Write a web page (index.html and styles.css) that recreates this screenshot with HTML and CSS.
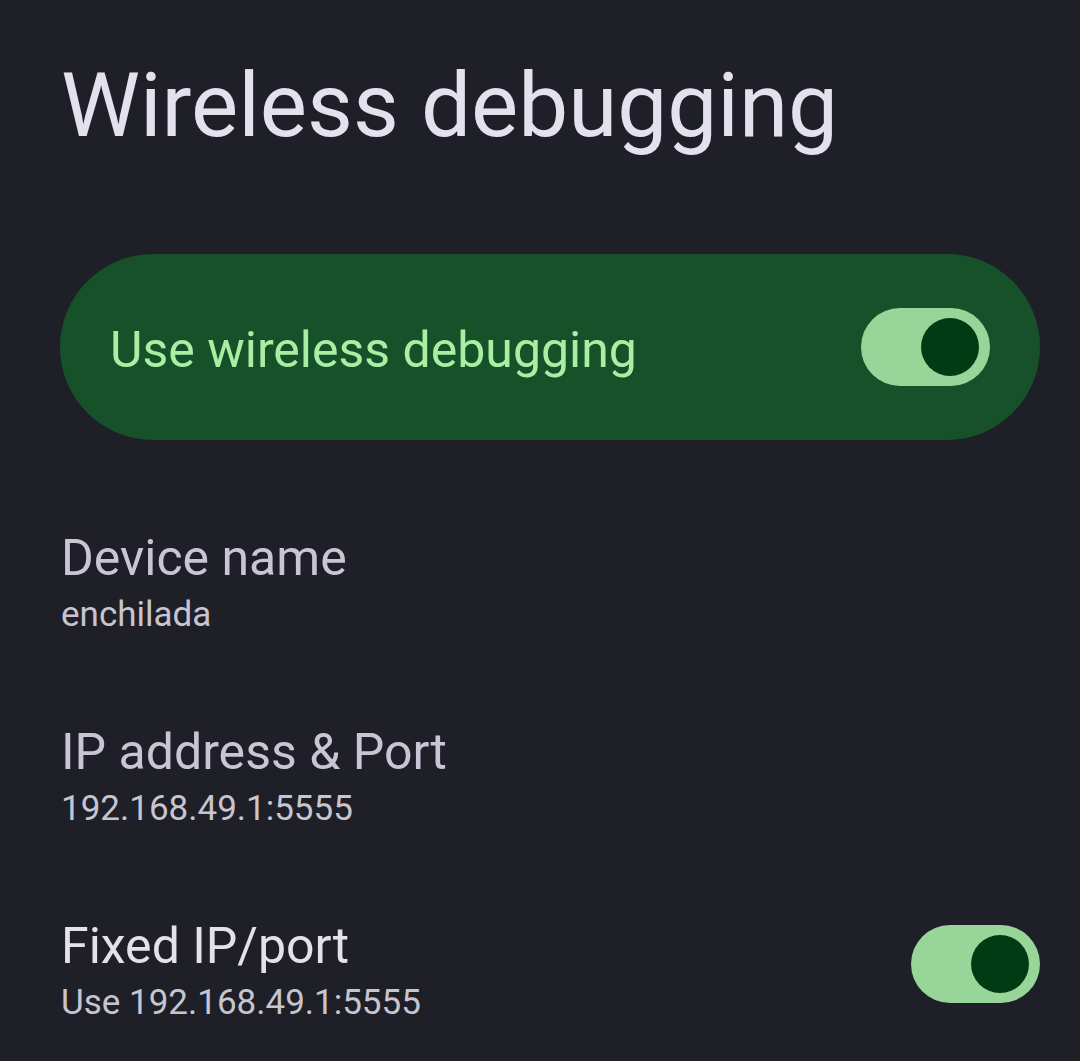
FILE: index.html
```html
<!DOCTYPE html>
<html lang="en">

<head>
    <meta charset="utf-8">
    <meta name="viewport" content="width=device-width, initial-scale=1.0">
    <title>Wireless debugging</title>

    <link rel="stylesheet" href="styles.css">
</head>

<body>

    <main class="side">
        <h1>Wireless debugging</h1>

        <section class="hoved">
            <span>Use wireless debugging</span>
            <div class="kontakt"><div class="knap"></div></div>
        </section>

        <section class="punkt svag">
            <h2>Device name</h2>
            <p>enchilada</p>
        </section>

        <section class="punkt svag">
            <h2>IP address &amp; Port</h2>
            <p>192.168.49.1:5555</p>
        </section>

        <section class="punkt raekke">
            <div>
                <h2>Fixed IP/port</h2>
                <p>Use 192.168.49.1:5555</p>
            </div>
            <div class="kontakt lav"><div class="knap"></div></div>
        </section>
    </main>

</body>

</html>
```

FILE: styles.css
```css
body {
    margin: 0;
    background-color: #1f1f28;
    font-family: Roboto, "Noto Sans", sans-serif;
}

.side {
    padding: 52px 40px 0 60px;
}

h1 {
    margin: 0;
    font-size: 89px;
    line-height: 108px;
    font-weight: 400;
    color: #e4e1ee;
    padding-left: 1px;
}

.hoved {
    margin-top: 94px;
    height: 186px;
    background-color: #17512a;
    border-radius: 93px;
    display: flex;
    align-items: center;
    justify-content: space-between;
    padding: 0 50px 0 50px;
    box-sizing: border-box;
}

.hoved span {
    font-size: 50px;
    line-height: 60px;
    color: #a8eea3;
    margin-top: 6px;
}

.kontakt {
    width: 129px;
    height: 78px;
    border-radius: 39px;
    background-color: #98d598;
    display: flex;
    align-items: center;
    justify-content: flex-end;
    padding-right: 11px;
    box-sizing: border-box;
}

.knap {
    width: 58px;
    height: 58px;
    border-radius: 50%;
    background-color: #003c13;
}

.punkt {
    margin-top: 88px;
    padding-left: 1px;
}

.punkt + .punkt {
    margin-top: 80px;
}

.punkt h2 {
    margin: 0;
    font-size: 50px;
    line-height: 60px;
    font-weight: 400;
    color: #e4e1ec;
}

.punkt p {
    margin: 0;
    font-size: 35px;
    line-height: 54px;
    color: #c6c5d0;
}

.svag h2 {
    color: #c8c6d4;
}

.raekke {
    display: flex;
    justify-content: space-between;
    align-items: flex-start;
}

.lav {
    margin-top: 9px;
}
```
